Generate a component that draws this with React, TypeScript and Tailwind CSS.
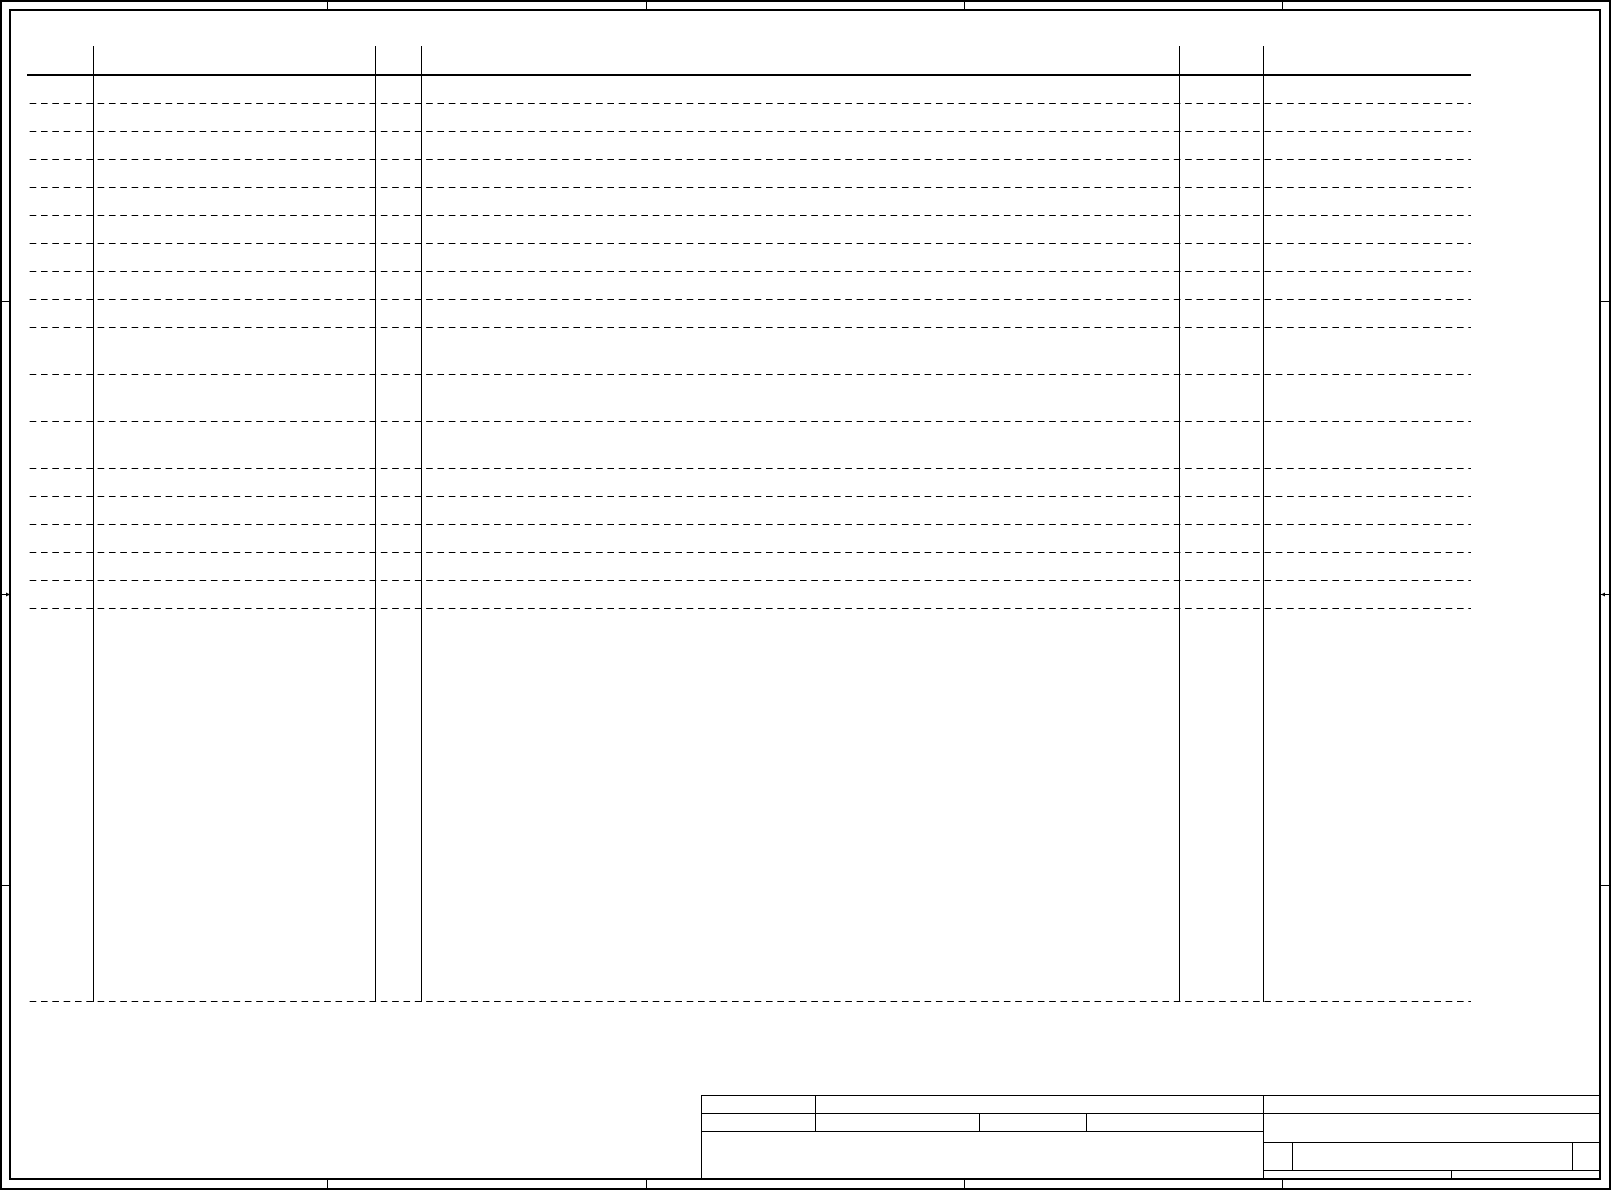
import React from 'react';

/* -------------------- Table layout -------------------- */
const cols = 'grid grid-cols-[67px_282px_46px_758px_84px_207px]';
const dashed =
  'bg-[linear-gradient(to_right,#000_7px,transparent_7px)] bg-[length:11.33px_1px] bg-bottom bg-repeat-x';

const rowHeights = [
  'h-[28px]', 'h-[28px]', 'h-[28px]', 'h-[28px]', 'h-[28px]', 'h-[28px]', 'h-[28px]', 'h-[28px]', 'h-[28px]',
  'h-[47px]', 'h-[47px]', 'h-[47px]',
  'h-[28px]', 'h-[28px]', 'h-[28px]', 'h-[28px]', 'h-[28px]',
  'h-[393px]',
];

function Cells() {
  return (
    <>
      <div className="border-r border-black" />
      <div className="border-r border-black" />
      <div className="border-r border-black" />
      <div className="border-r border-black" />
      <div className="border-r border-black" />
      <div />
    </>
  );
}

function Arrow({ dir }: { dir: 'left' | 'right' }) {
  return (
    <svg width="8" height="7" viewBox="0 0 8 7" className="block">
      <line x1="0" y1="3.5" x2="8" y2="3.5" stroke="#000" strokeWidth="1" />
      {dir === 'right' ? (
        <polygon points="8,3.5 4,1.5 4,5.5" fill="#000" />
      ) : (
        <polygon points="0,3.5 4,1.5 4,5.5" fill="#000" />
      )}
    </svg>
  );
}

export default function App() {
  return (
    <div className="w-[1611px] h-[1190px] bg-white">
      <div className="w-[1611px] h-[1190px] border-2 border-black flex flex-col">
        {/* top zone strip */}
        <div className="h-[7px] flex shrink-0">
          <div className="w-[326px] border-r border-black" />
          <div className="w-[319px] border-r border-black" />
          <div className="w-[318px] border-r border-black" />
          <div className="w-[318px] border-r border-black" />
        </div>

        <div className="flex flex-1 min-h-0">
          {/* left zone strip */}
          <div className="w-[7px] shrink-0 flex flex-col relative">
            <div className="h-[293px] border-b border-black" />
            <div className="h-[584px] border-b border-black" />
            <div className="absolute left-0 top-[582px]">
              <Arrow dir="right" />
            </div>
          </div>

          {/* inner frame */}
          <div className="flex-1 border-2 border-black flex flex-col">
            <div className="ml-[16px] mt-[35px] w-[1444px]">
              <div className={`${cols} h-[30px] border-b-2 border-black`}>
                <Cells />
              </div>
              {rowHeights.map((h, i) => (
                <div key={i} className={`${cols} ${h} ${dashed}`}>
                  <Cells />
                </div>
              ))}
            </div>

            <div className="flex-1" />

            {/* title block */}
            <div className="self-end w-[898px] h-[83px] border-l border-t border-black flex">
              <div className="w-[561px] flex flex-col">
                <div className="h-[18px] border-b border-black flex">
                  <div className="w-[114px] border-r border-black" />
                </div>
                <div className="h-[18px] border-b border-black flex">
                  <div className="w-[114px] border-r border-black" />
                  <div className="w-[164px] border-r border-black" />
                  <div className="w-[107px] border-r border-black" />
                </div>
                <div className="flex-1" />
              </div>
              <div className="flex-1 border-l border-black flex flex-col">
                <div className="h-[18px] border-b border-black" />
                <div className="h-[29px] border-b border-black" />
                <div className="h-[28px] border-b border-black flex">
                  <div className="w-[29px] border-r border-black" />
                  <div className="w-[280px] border-r border-black" />
                </div>
                <div className="flex-1 flex">
                  <div className="w-[188px] border-r border-black" />
                </div>
              </div>
            </div>
          </div>

          {/* right zone strip */}
          <div className="w-[8px] shrink-0 flex flex-col relative">
            <div className="h-[293px] border-b border-black" />
            <div className="h-[584px] border-b border-black" />
            <div className="absolute left-0 top-[582px]">
              <Arrow dir="left" />
            </div>
          </div>
        </div>

        {/* bottom zone strip */}
        <div className="h-[8px] flex shrink-0">
          <div className="w-[326px] border-r border-black" />
          <div className="w-[319px] border-r border-black" />
          <div className="w-[318px] border-r border-black" />
          <div className="w-[318px] border-r border-black" />
        </div>
      </div>
    </div>
  );
}
